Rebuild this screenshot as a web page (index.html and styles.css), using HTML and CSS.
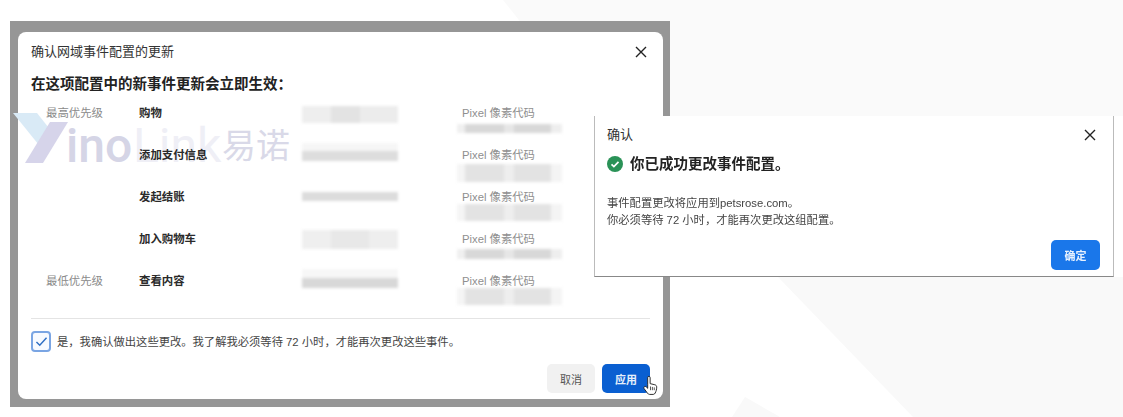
FILE: index.html
```html
<!DOCTYPE html>
<html lang="zh">
<head>
<meta charset="utf-8">
<title>确认网域事件配置的更新</title>
<link rel="stylesheet" href="styles.css">
</head>
<body>
<div class="canvas">
  <svg class="bg" width="1123" height="417" viewBox="0 0 1123 417" aria-hidden="true">
    <polygon points="503,0 1123,0 1123,116 595,116" fill="#fafafa"/>
    <polygon points="778,277 1123,277 1123,417 913,417" fill="#f9f9f9"/>
    <polygon points="732,417 745,397 780,417" fill="#f9f9f9"/>
  </svg>

  <section class="frame">
    <div class="dialog main">
      <div class="mark" aria-hidden="true">
        <svg class="mark-y" width="56" height="51" viewBox="0 0 56 51"><polygon points="0,0 24,0 43,24 30,37" fill="#d9eaf6"/><polygon points="37,9 55,9 30,50 12,50" fill="#d6d4ea"/></svg>
        <span class="mark-ino">ino</span><span class="mark-link">Link</span><span class="mark-cn">易诺</span>
      </div>
      <header class="head">
        <h2 class="title">确认网域事件配置的更新</h2>
        <svg class="close" width="12" height="12" viewBox="0 0 12 12"><path d="M1 1l10 10M11 1L1 11" stroke="#222" stroke-width="1.4" fill="none"/></svg>
      </header>
      <h3 class="lead main-lead">在这项配置中的新事件更新会立即生效：</h3>
      <div class="rows">
        <div class="row"><span class="prio">最高优先级</span><b class="event">购物</b><span class="blur b1 r1"></span><div class="src"><span class="pix">Pixel 像素代码</span><span class="blur b2 s1"></span></div></div>
        <div class="row"><span class="prio"></span><b class="event">添加支付信息</b><span class="blur b1 r2"></span><div class="src"><span class="pix">Pixel 像素代码</span><span class="blur b2 s2"></span></div></div>
        <div class="row"><span class="prio"></span><b class="event">发起结账</b><span class="blur b1 r3"></span><div class="src"><span class="pix">Pixel 像素代码</span><span class="blur b2 s3"></span></div></div>
        <div class="row"><span class="prio"></span><b class="event">加入购物车</b><span class="blur b1 r4"></span><div class="src"><span class="pix">Pixel 像素代码</span><span class="blur b2 s4"></span></div></div>
        <div class="row"><span class="prio">最低优先级</span><b class="event">查看内容</b><span class="blur b1 r5"></span><div class="src"><span class="pix">Pixel 像素代码</span><span class="blur b2 s5"></span></div></div>
      </div>
      <div class="confirm">
        <span class="check"><svg width="13" height="11" viewBox="0 0 14 12"><path d="M1.500 6.500l3.600 3.600L12.500 1.800" stroke="#2f6fc4" stroke-width="1.600" fill="none"/></svg></span>
        <span class="confirm-text">是，我确认做出这些更改。我了解我必须等待 72 小时，才能再次更改这些事件。</span>
      </div>
      <footer class="actions">
        <span class="btn cancel">取消</span>
        <span class="btn apply">应用</span>
      </footer>
    </div>
    <svg class="cursor" width="15" height="21" viewBox="0 0 16 22"><path d="M5 10V2.600a1.300 1.300 0 0 1 2.600 0V9l5 1.200c1.300.3 2 1.200 2 2.500 0 2.600-.6 4.300-1.600 6.300-.4.8-1 1.500-2 1.500H7c-1 0-1.600-.5-2.200-1.300L1.300 14.500c-.6-.9-.5-1.800.2-2.300.7-.5 1.600-.2 2.200.6L5 14z" fill="#fff" stroke="#222" stroke-width="1"/><path d="M8 12v4M10 12.500v3.500M12 13v3" stroke="#222" stroke-width=".8" fill="none"/></svg>
  </section>

  <section class="dialog success">
    <header class="s-head">
      <h2 class="title">确认</h2>
      <svg class="close" width="12" height="12" viewBox="0 0 12 12"><path d="M1 1l10 10M11 1L1 11" stroke="#222" stroke-width="1.4" fill="none"/></svg>
    </header>
    <div class="s-lead">
      <svg width="16" height="16" viewBox="0 0 16 16"><circle cx="8" cy="8" r="8" fill="#2a9257"/><path d="M4.500 8.300l2.400 2.300 4.600-4.800" stroke="#fff" stroke-width="1.700" fill="none"/></svg>
      <h3 class="lead s-title">你已成功更改事件配置。</h3>
    </div>
    <p class="s-body">事件配置更改将应用到petsrose.com。<br>你必须等待 72 小时，才能再次更改这组配置。</p>
    <footer class="s-actions"><span class="btn ok">确定</span></footer>
  </section>
</div>
</body>
</html>
```

FILE: styles.css
```css
* { box-sizing: border-box; }
html, body { margin: 0; background: #fff; }
body { font-family: "Liberation Sans", "Noto Sans CJK SC", sans-serif; color: #2b2b2b; overflow: hidden; }
h2, h3, p { margin: 0; }

.canvas { position: relative; width: 1123px; height: 417px; overflow: hidden; filter: blur(.45px); }
.bg { position: absolute; left: 0; top: 0; }

.frame {
  position: absolute; left: 10px; top: 21px; width: 660px; height: 386px;
  background: #969696; padding: 11px 7px 8px 8px;
}
.dialog { background: #fff; }
.main {
  position: relative; height: 100%; border-radius: 8px; padding: 0 13px;
  display: flex; flex-direction: column;
}
.head { display: flex; justify-content: space-between; align-items: center; height: 40px; padding-right: 3px; position: relative; }
.title { font-size: 13px; font-weight: 400; color: #333; line-height: 20px; }
.lead { font-size: 14.500px; font-weight: 700; color: #222; line-height: 22px; }
.main-lead { margin-top: 1px; position: relative; }
.rows { margin-top: 8px; display: flex; flex-direction: column; position: relative; }
.row { display: flex; height: 42px; align-items: flex-start; padding-top: 2px; }
.prio { width: 108px; padding-left: 15px; font-size: 11.400px; line-height: 16px; color: #8a8a8a; }
.event { width: 163px; font-size: 11.400px; line-height: 16px; font-weight: 700; color: #2a2a2a; }
.src { margin-left: 59px; width: 105px; display: flex; flex-direction: column; }
.pix { padding-left: 5px; font-size: 11.300px; line-height: 16px; color: #8f8f8f; white-space: nowrap; }

.blur { display: block; filter: blur(1.500px); }
.b1 { width: 96px; }
.r1 { height: 17px; margin-top: 1px; background: linear-gradient(90deg, #eeeeee 0 30%, #e3e3e3 30% 60%, #ececec 60% 100%); }
.r2 { height: 18px; margin-top: -4px; background: linear-gradient(#f6f6f6 0 45%, #dddddd 45% 100%); }
.r3 { height: 9px; margin-top: 3px; background: #dcdcdc; }
.r4 { height: 19px; margin-top: -1px; background: linear-gradient(90deg, #efefef 0 30%, #e8e8e8 30% 70%, #eeeeee 70% 100%); }
.r5 { height: 19px; margin-top: -4px; background: linear-gradient(#f7f7f7 0 45%, #d8d8d8 45% 100%); }

.b2 { width: 105px; background: linear-gradient(90deg, #f0f0f0 0 8%, #d8d8d8 8% 45%, #e6e6e6 45% 54%, #d8d8d8 54% 90%, #eeeeee 90% 100%); }
.s1 { height: 9px; margin-top: 3px; }
.s2, .s3, .s5 { background: linear-gradient(90deg, #f5f5f5 0 8%, #e3e3e3 8% 45%, #eeeeee 45% 54%, #e3e3e3 54% 90%, #f4f4f4 90% 100%); }
.s2 { height: 18px; margin-top: 1px; }
.s3 { height: 17px; margin-top: -1px; }
.s4 { height: 10px; margin-top: 2px; }
.s5 { height: 17px; margin-top: -1px; }

.confirm {
  margin-top: auto; border-top: 1px solid #e4e4e4; display: flex; align-items: center; gap: 6px;
  padding-top: 12px; position: relative;
}
.check {
  width: 20px; height: 21px; border: 2px solid #7aa5e3; border-radius: 4px;
  display: flex; align-items: center; justify-content: center; background: #f7faff;
}
.confirm-text { font-size: 11.300px; line-height: 16px; color: #444; }
.actions { display: flex; justify-content: flex-end; gap: 7px; margin: 12px 0 6px; position: relative; }
.btn {
  display: flex; align-items: center; justify-content: center;
  height: 29px; border-radius: 5px; font-size: 11px; font-weight: 700;
}
.cancel { width: 48px; background: #f1f1f1; color: #555; font-weight: 400; }
.apply { width: 48px; background: #0a5fd1; color: #e6effb; }

.mark { position: absolute; left: -5px; top: 81px; width: 285px; height: 52px; pointer-events: none; }
.mark-y { position: absolute; left: 0; top: 0; }
.mark-ino, .mark-link, .mark-cn { position: absolute; white-space: nowrap; font-family: Roboto, "Noto Sans CJK SC", sans-serif; }
.mark-ino { left: 53px; top: 7px; font-size: 48px; line-height: 52px; font-weight: 500; color: #d5d5e6; }
.mark-link { left: 120px; top: 7px; font-size: 48px; line-height: 52px; color: #efeff6; }
.mark-cn { left: 209px; top: 16px; font-size: 34px; line-height: 34px; color: #d9d9e8; font-weight: 400; }

.cursor { position: absolute; left: 633px; top: 354px; }

.success {
  position: absolute; left: 594px; top: 116px; width: 520px; height: 161px;
  border-bottom: 1px solid #888; border-left: 1px solid #bbb; border-right: 1px solid #bbb;
  padding: 0 16px 0 12px; display: flex; flex-direction: column;
}
.s-head { display: flex; justify-content: space-between; align-items: center; height: 37px; padding-right: 1px; }
.s-lead { display: flex; align-items: center; gap: 7px; height: 22px; }
.s-body { margin-top: 20px; font-size: 11.300px; line-height: 17px; color: #444; }
.s-actions { margin-top: auto; margin-bottom: 6px; display: flex; justify-content: flex-end; margin-right: -3px; }
.ok { width: 49px; height: 30px; background: #1a77ea; color: #e8f2ff; }
```
